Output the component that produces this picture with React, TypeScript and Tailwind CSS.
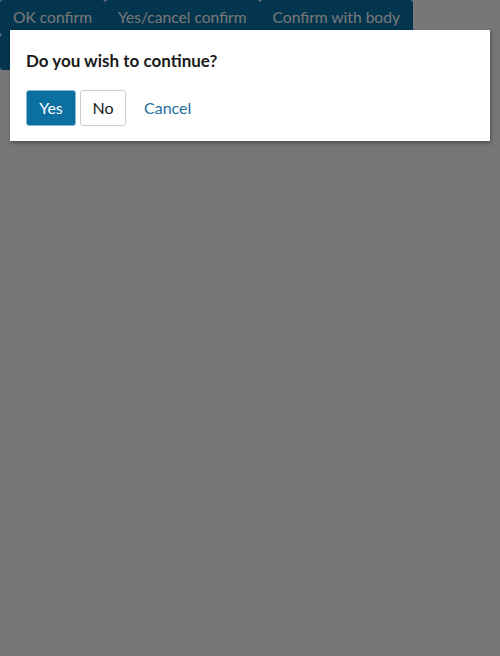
import React from "react";

export default function App() {
  const btns = ["OK confirm", "Yes/cancel confirm", "Confirm with body"];
  return (
    <div className="relative w-[500px] h-[656px] bg-white overflow-hidden" style={{ fontFamily: "Lato, 'Noto Sans', sans-serif" }}>
      <div className="flex flex-wrap w-[440px]">
        {btns.map((b) => (
          <button key={b} className="h-[35px] px-[13px] rounded-[3px] bg-[#0872a8] text-white text-[15.6px] leading-none whitespace-nowrap">
            {b}
          </button>
        ))}
        <button aria-label="Confirm with custom buttons" className="h-[35px] w-[220px] rounded-[3px] bg-[#0872a8]" />
      </div>
      <div className="absolute inset-0 bg-[rgba(0,0,0,0.535)]" />
      <div className="absolute left-[10px] top-[30px] w-[480px] bg-white shadow-[1px_2px_4px_rgba(0,0,0,0.35)] pl-4 pr-4 pt-[19px] pb-[15px]">
        <h2 className="text-[17px] font-bold leading-6 text-[#1a1a1a]">Do you wish to continue?</h2>
        <div className="mt-[17px] flex items-center gap-[4px]">
          <button className="h-[36px] w-[50px] rounded-[3px] bg-[#0b6fa0] border border-[#8bb3dc] text-white text-[16px]">Yes</button>
          <button className="h-[36px] w-[46px] rounded-[3px] bg-white border border-[#cfcfcf] text-[#1a1a1a] text-[16px]">No</button>
          <button className="h-[36px] px-[14px] text-[#1c6e9c] text-[16px]">Cancel</button>
        </div>
      </div>
    </div>
  );
}
